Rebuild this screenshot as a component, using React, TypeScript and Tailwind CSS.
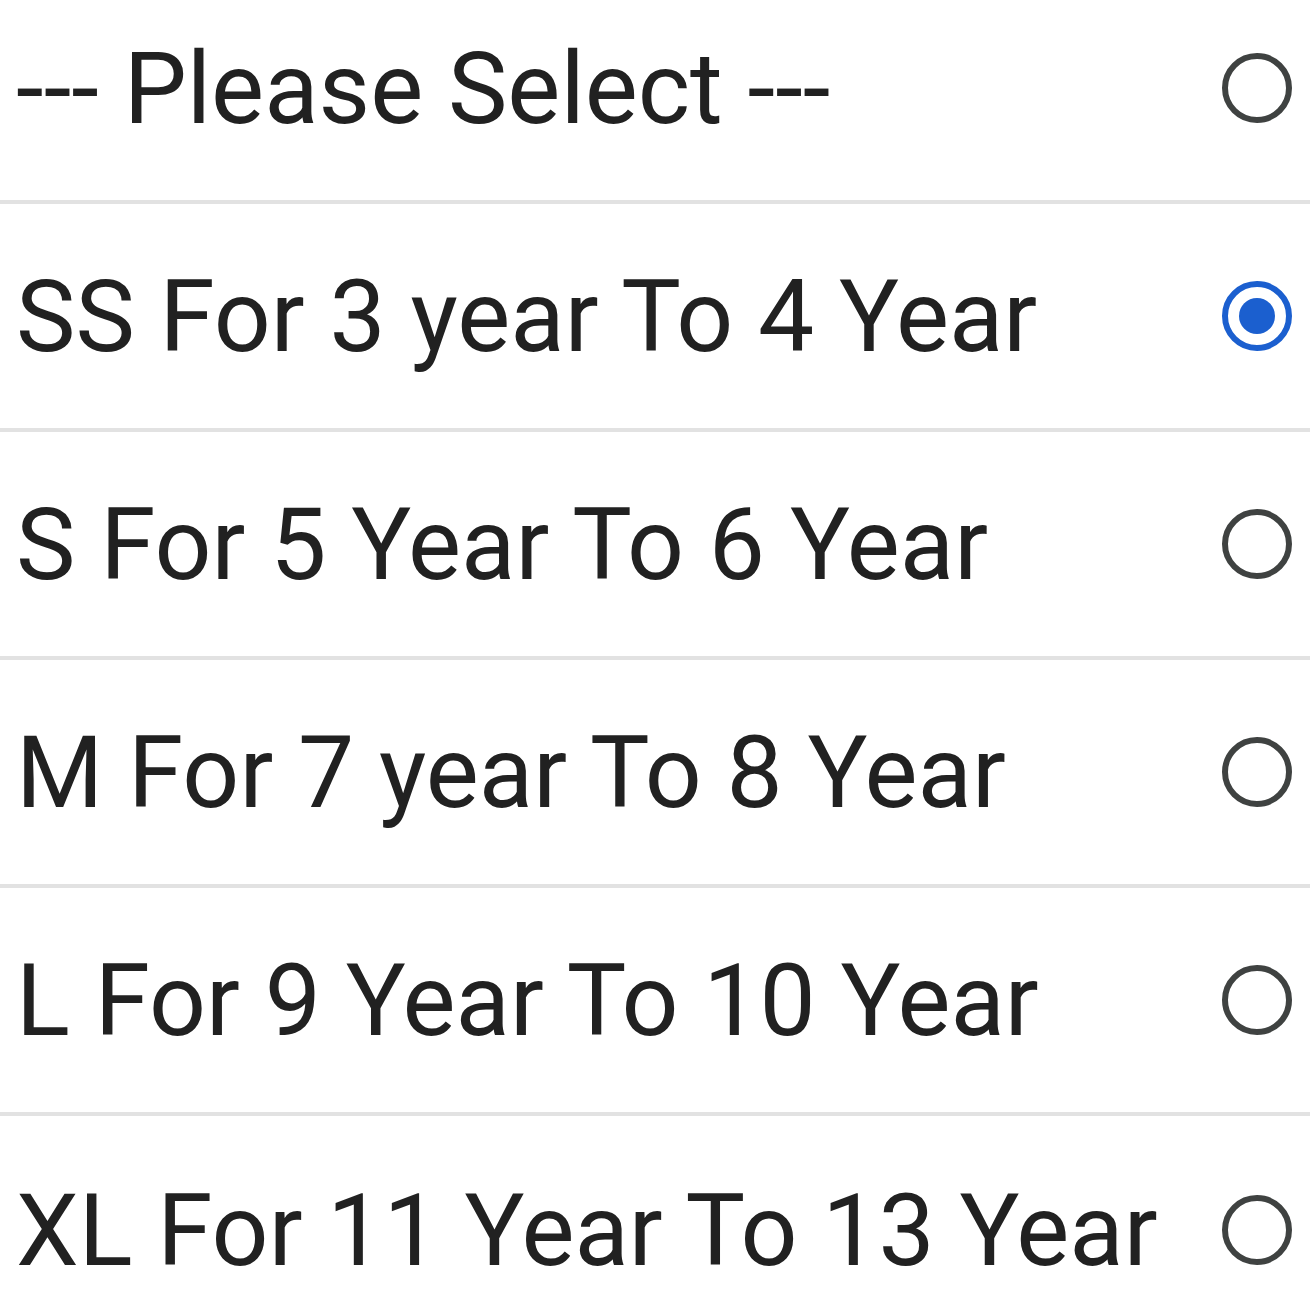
const options = [
  "--- Please Select ---",
  "SS For 3 year To 4 Year",
  "S For 5 Year To 6 Year",
  "M For 7 year To 8 Year",
  "L For 9 Year To 10 Year",
  "XL For 11 Year To 13 Year",
];

function Radio({ checked }: { checked: boolean }) {
  return (
    <span
      className={
        checked
          ? "flex h-[70px] w-[70px] shrink-0 items-center justify-center rounded-full border-[6px] border-[#1b5fcf]"
          : "flex h-[70px] w-[70px] shrink-0 items-center justify-center rounded-full border-[6px] border-[#3f4241]"
      }
    >
      {checked && <span className="h-[36px] w-[36px] rounded-full bg-[#1b5fcf]" />}
    </span>
  );
}

export default function App() {
  const selected = 1;

  return (
    <div className="h-[1310px] w-[1310px] overflow-hidden bg-white">
      <ul className="-mt-[24px]">
        {options.map((label, i) => (
          <li
            key={label}
            className={
              i < options.length - 1
                ? "flex h-[228px] items-center justify-between border-b-4 border-[#e2e2e2] pl-[16px] pr-[18px]"
                : "flex h-[228px] items-center justify-between pl-[16px] pr-[18px]"
            }
          >
            <span className="whitespace-nowrap pt-[2px] text-[100px] leading-none text-[#212121] [font-family:Roboto,sans-serif]">
              {label}
            </span>
            <Radio checked={i === selected} />
          </li>
        ))}
      </ul>
    </div>
  );
}
